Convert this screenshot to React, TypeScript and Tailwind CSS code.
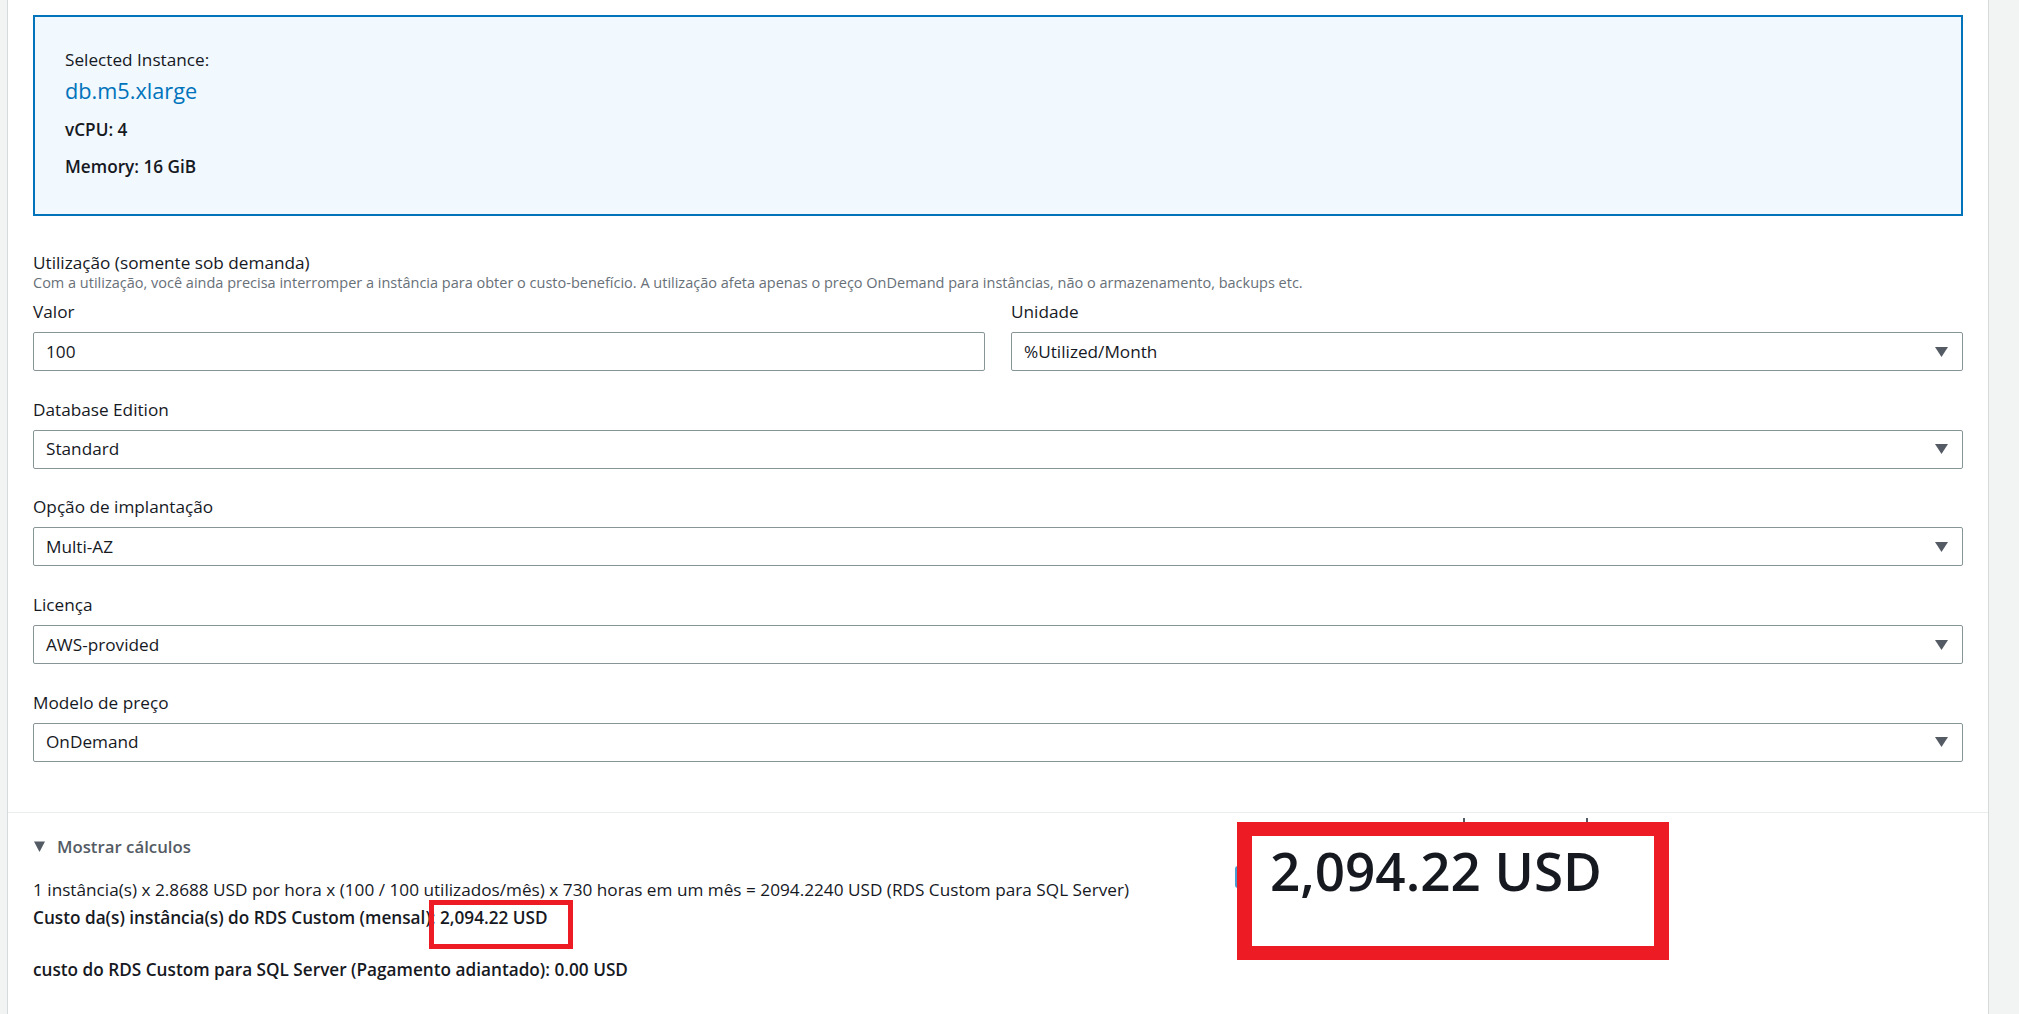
import React from "react";

function Arrow() {
  return (
    <svg width="13" height="10" viewBox="0 0 13 10" className="shrink-0">
      <polygon points="0,0 13,0 6.5,10" fill="#545b64" />
    </svg>
  );
}

function Field({ label, value, select = true, first = false }: { label: string; value: string; select?: boolean; first?: boolean }) {
  return (
    <div className={first ? "" : "mt-[28.7px]"}>
      <div className="h-[20px] leading-[20px]">{label}</div>
      <div className="mt-[10px] h-[39px] rounded-[2px] border border-[#879596] bg-white flex items-center justify-between pl-[12px] pr-[14px]">
        <span>{value}</span>
        {select ? <Arrow /> : null}
      </div>
    </div>
  );
}

export default function App() {
  return (
    <div className="flex h-[1014px] w-[2019px] overflow-hidden bg-white font-['Open_Sans',Arial,sans-serif] text-[17.2px] text-[#16191f]">
      <div className="w-[8px] shrink-0 border-r border-[#d5dbdb] bg-[#f2f3f3]" />
      <main className="flex min-w-0 flex-1 flex-col">
        <div className="px-[25px] pt-[15px]">
          <div className="h-[201px] border-2 border-[#0073bb] bg-[#f1f8fe] pl-[30px] pt-[33px]">
            <div className="h-[20px] leading-[20px]">Selected Instance:</div>
            <div className="mt-[9px] h-[24px] leading-[24px] text-[21.7px] text-[#0073bb]">db.m5.xlarge</div>
            <div className="mt-[17px] h-[20px] leading-[20px] font-semibold">vCPU: 4</div>
            <div className="mt-[17px] h-[20px] leading-[20px] font-semibold">Memory: 16 GiB</div>
          </div>

          <div className="mt-[37px] h-[20px] leading-[20px]">Utilização (somente sob demanda)</div>
          <div className="mt-[1px] h-[18px] leading-[18px] text-[14.5px] text-[#687078]">
            Com a utilização, você ainda precisa interromper a instância para obter o custo-benefício. A utilização afeta apenas o preço OnDemand para instâncias, não o armazenamento, backups etc.
          </div>
          <div className="mt-[10px] grid grid-cols-2 gap-x-[26px]">
            <Field label="Valor" value="100" select={false} first />
            <Field label="Unidade" value="%Utilized/Month" first />
          </div>
          <Field label="Database Edition" value="Standard" />
          <Field label="Opção de implantação" value="Multi-AZ" />
          <Field label="Licença" value="AWS-provided" />
          <Field label="Modelo de preço" value="OnDemand" />
        </div>

        <div className="mt-[50px] border-t border-[#eaeded]" />

        <section className="relative flex-1 px-[25px] pt-[24px]">
          <div className="flex h-[20px] items-center gap-[12px] pl-[1px] font-semibold text-[16.8px] text-[#545b64]">
            <svg width="11" height="11" viewBox="0 0 11 11">
              <polygon points="0,0.5 11,0.5 5.5,11" fill="#545b64" />
            </svg>
            <span className="leading-[20px]">Mostrar cálculos</span>
          </div>
          <div className="mt-[19px] leading-[28px]">
            1 instância(s) x 2.8688 USD por hora x (100 / 100 utilizados/mês) x 730 horas em um mês = 2094.2240 USD (RDS Custom para SQL Server)
          </div>
          <div className="leading-[28px] font-semibold">
            Custo da(s) instância(s) do RDS Custom (mensal):{" "}
            <span className="relative">
              2,094.22 USD
              <span className="absolute left-[-11px] w-[144px] top-[-6px] h-[49px] border-[5px] border-[#ed1c24]" />
            </span>
          </div>
          <div className="mt-[28px] leading-[20px] font-semibold">
            custo do RDS Custom para SQL Server (Pagamento adiantado): 0.00 USD
          </div>

          <div className="absolute left-[1227px] top-[53px] h-[22px] w-[3px] rounded-l-full border-l-2 border-[#0073bb]/70" />
          <div className="absolute left-[1455px] top-[5px] h-[5px] w-[2px] bg-[#545b64]" />
          <div className="absolute left-[1578px] top-[5px] h-[5px] w-[2px] bg-[#545b64]" />
          <div className="absolute left-[1229px] top-[9px] h-[138px] w-[432px] border-x-[15px] border-y-[14px] border-[#ed1c24] bg-white pl-[18px] pt-[10px]">
            <div className="h-[50px] leading-[50px] text-[53px] font-semibold text-[#16191f]">2,094.22 USD</div>
          </div>
        </section>
      </main>
      <div className="w-[31px] shrink-0 border-l border-[#d5dbdb] bg-[#f2f3f3]" />
    </div>
  );
}
